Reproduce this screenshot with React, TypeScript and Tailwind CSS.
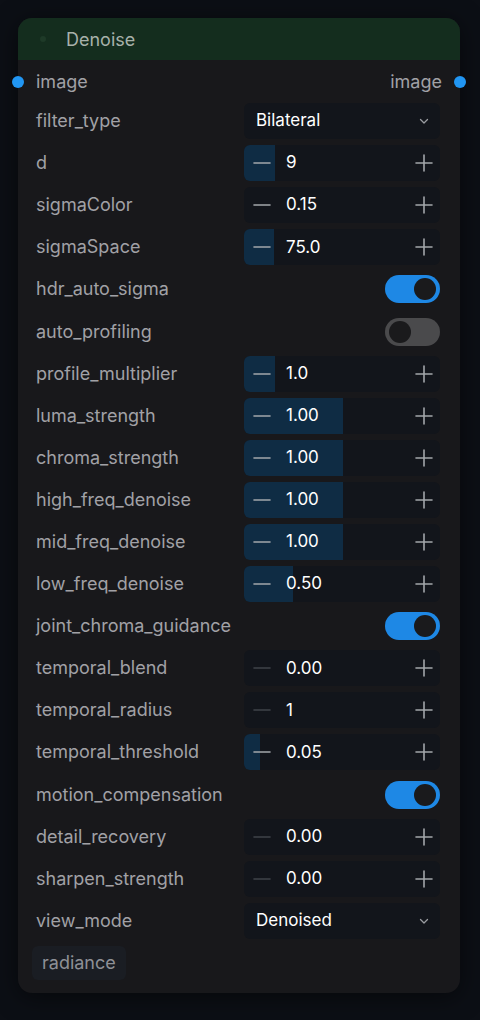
type Row =
  | { kind: "select"; label: string; value: string }
  | { kind: "number"; label: string; value: string; fill: number; atMin?: boolean }
  | { kind: "toggle"; label: string; on: boolean }

const rows: Row[] = [
  { kind: "select", label: "filter_type", value: "Bilateral" },
  { kind: "number", label: "d", value: "9", fill: 31 },
  { kind: "number", label: "sigmaColor", value: "0.15", fill: 0 },
  { kind: "number", label: "sigmaSpace", value: "75.0", fill: 30 },
  { kind: "toggle", label: "hdr_auto_sigma", on: true },
  { kind: "toggle", label: "auto_profiling", on: false },
  { kind: "number", label: "profile_multiplier", value: "1.0", fill: 31 },
  { kind: "number", label: "luma_strength", value: "1.00", fill: 99 },
  { kind: "number", label: "chroma_strength", value: "1.00", fill: 99 },
  { kind: "number", label: "high_freq_denoise", value: "1.00", fill: 99 },
  { kind: "number", label: "mid_freq_denoise", value: "1.00", fill: 99 },
  { kind: "number", label: "low_freq_denoise", value: "0.50", fill: 49 },
  { kind: "toggle", label: "joint_chroma_guidance", on: true },
  { kind: "number", label: "temporal_blend", value: "0.00", fill: 0, atMin: true },
  { kind: "number", label: "temporal_radius", value: "1", fill: 0, atMin: true },
  { kind: "number", label: "temporal_threshold", value: "0.05", fill: 16 },
  { kind: "toggle", label: "motion_compensation", on: true },
  { kind: "number", label: "detail_recovery", value: "0.00", fill: 0, atMin: true },
  { kind: "number", label: "sharpen_strength", value: "0.00", fill: 0, atMin: true },
  { kind: "select", label: "view_mode", value: "Denoised" },
]

function Minus({ dim }: { dim?: boolean }) {
  return (
    <svg width="20" height="20" viewBox="0 0 20 20" className={dim ? "text-[#3f434a]" : "text-[#a3a6ab]"}>
      <path d="M2 10h16" stroke="currentColor" strokeWidth="1.6" strokeLinecap="round" />
    </svg>
  )
}

function Plus() {
  return (
    <svg width="20" height="20" viewBox="0 0 20 20" className="text-[#a3a6ab]">
      <path d="M2 10h16M10 2v16" stroke="currentColor" strokeWidth="1.6" strokeLinecap="round" />
    </svg>
  )
}

function Widget({ row }: { row: Row }) {
  if (row.kind === "toggle") {
    return (
      <div className="flex w-[196px] justify-end">
        <div
          className={`flex h-[28px] w-[55px] items-center rounded-full px-[4px] ${
            row.on ? "justify-end bg-[#1e88e5]" : "justify-start bg-[#4a4a4c]"
          }`}
        >
          <div className="h-[22px] w-[22px] rounded-full bg-[#1a1a1c]" />
        </div>
      </div>
    )
  }
  if (row.kind === "select") {
    return (
      <div className="flex h-[36px] w-[196px] items-center justify-between rounded-md bg-[#12151b] pl-[12px] pr-[10px]">
        <span className="text-[17px] text-white">{row.value}</span>
        <svg width="12" height="12" viewBox="0 0 12 12" className="text-[#9a9ca1]">
          <path d="M2.5 4.5 6 8l3.5-3.5" fill="none" stroke="currentColor" strokeWidth="1.3" strokeLinecap="round" strokeLinejoin="round" />
        </svg>
      </div>
    )
  }
  return (
    <div className="relative flex h-[36px] w-[196px] items-center overflow-hidden rounded-md bg-[#12151b]">
      {row.fill > 0 && (
        <div className="absolute inset-y-0 left-0 bg-[#0f2c44]" style={{ width: row.fill }} />
      )}
      <div className="relative flex w-full items-center pl-[8px] pr-[6px]">
        <Minus dim={row.atMin} />
        <span className="ml-[14px] flex-1 text-[17px] text-white">{row.value}</span>
        <Plus />
      </div>
    </div>
  )
}

export default function App() {
  return (
    <div className="min-h-screen bg-[#0c0f15] pt-[18px] font-['Inter',sans-serif]">
      <div className="relative ml-[18px] w-[442px] rounded-[14px] bg-[#18181b] pb-[13px] shadow-[0_4px_24px_rgba(0,0,0,0.5)]">
        <div className="flex h-[42px] items-center rounded-t-[14px] bg-[#142d1e] pl-[22px]">
          <span className="h-[6px] w-[6px] rounded-full bg-[#1e3a28]" />
          <span className="ml-[20px] text-[18px] text-[#a7b1aa]">Denoise</span>
        </div>
        <div className="pt-[4px]">
          <div className="relative flex h-[36px] items-center justify-between px-[18px] text-[18px] leading-[20px] text-[#a1a1a6]">
            <span className="absolute left-[-6px] h-[12px] w-[12px] rounded-full bg-[#2196f3]" />
            <span>image</span>
            <span>image</span>
            <span className="absolute right-[-6px] h-[12px] w-[12px] rounded-full bg-[#2196f3]" />
          </div>
          {rows.map((row) => (
            <div key={row.label} className="flex h-[42.1px] items-center justify-between pl-[18px] pr-[20px]">
              <span className="text-[18px] leading-[20px] text-[#a1a1a6]">{row.label}</span>
              <Widget row={row} />
            </div>
          ))}
        </div>
        <div className="ml-[14px] mt-[4px] inline-flex h-[34px] items-center rounded-md bg-[#1a1d23] px-[10px]">
          <span className="text-[18px] text-[#8e9096]">radiance</span>
        </div>
      </div>
    </div>
  )
}
